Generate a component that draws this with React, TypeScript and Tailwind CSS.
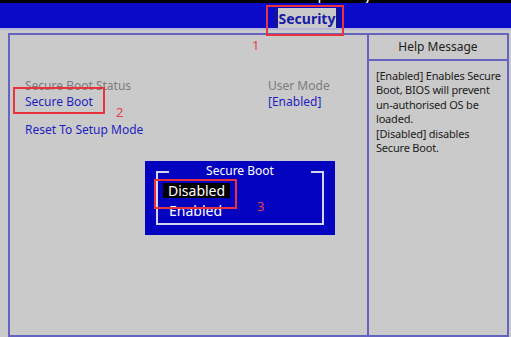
const font = "font-['Noto_Sans','Open_Sans','DejaVu_Sans',sans-serif]";

function HelpPanel() {
  return (
    <div className="flex-1 flex flex-col">
      <div className="h-[26px] flex items-center justify-center border-b-2 border-[#6464c0] text-[12px] text-[#202020]">
        Help Message
      </div>
      <div className="pl-[7px] pt-[8px] text-[11px] leading-[14.4px] tracking-[-0.2px] text-[#1c1c1c]">
        [Enabled] Enables Secure Boot, BIOS will prevent un-authorised OS be loaded.
        <br />
        [Disabled] disables
        <br />
        Secure Boot.
      </div>
    </div>
  );
}

function SecureBootPopup() {
  return (
    <div className="absolute left-[145px] top-[161px] w-[190px] h-[74px] bg-[#0404c0] pt-[11px] px-[11px]">
      <div className="relative h-[53px] border-x-2 border-b-2 border-[#d4d4ec]">
        <div className="absolute -left-[2px] -top-[1px] w-[13px] h-[2px] bg-[#d4d4ec]" />
        <div className="absolute -right-[2px] -top-[1px] w-[13px] h-[2px] bg-[#d4d4ec]" />
        <div className="absolute left-0 right-0 -top-[9px] text-center text-[12px] leading-[16px] text-white">
          Secure Boot
        </div>
        <div className="pt-[11px] pl-[5px] flex flex-col items-start">
          <span className="bg-black text-white text-[14px] leading-[15px] h-[15px] px-[5px]">Disabled</span>
          <span className="text-white text-[14px] leading-[16px] mt-[5px] pl-[6px]">Enabled</span>
        </div>
      </div>
    </div>
  );
}

export default function App() {
  return (
    <div className={`relative w-[511px] h-[337px] overflow-hidden bg-[#cacaca] ${font}`}>
      <div className="h-[3px] bg-black overflow-hidden relative">
        <span className="absolute left-[286px] -top-[14px] text-[15px] leading-[16px] text-white">
          Setup Utility
        </span>
      </div>
      <div className="h-[25px] bg-[#0a0ac8] flex items-end">
        <div className="ml-[274px] h-[20px] flex">
          <div className="w-[4px] bg-[#12129a]" />
          <div className="w-[58px] bg-[#cacaca] flex items-center justify-center text-[14px] font-bold text-[#1a1aa6]">
            Security
          </div>
          <div className="w-[4px] bg-[#12129a]" />
        </div>
      </div>
      <div className="h-[2px] bg-[#b4b4dc]" />
      <div className="pt-[3px] pl-[8px]">
        <div className="w-[501px] h-[304px] border-2 border-[#6464c0] flex">
          <div className="w-[359px] border-r-2 border-[#6464c0] pl-[15px] pt-[43px] text-[12px] leading-[16px]">
            <div className="grid grid-cols-[243px_1fr]">
              <span className="text-[#7c7c7c]">Secure Boot Status</span>
              <span className="text-[#7c7c7c]">User Mode</span>
              <span className="text-[#1e1ec0]">Secure Boot</span>
              <span className="text-[#1e1ec0]">[Enabled]</span>
            </div>
            <div className="mt-[12px] text-[#1e1ec0]">Reset To Setup Mode</div>
          </div>
          <HelpPanel />
        </div>
      </div>

      <SecureBootPopup />

      <div className="absolute left-[266px] top-[5px] w-[78px] h-[31px] border-2 border-[#e8323c]" />
      <div className="absolute left-[252px] top-[37px] text-[13px] leading-[16px] text-[#e8404c]">1</div>
      <div className="absolute left-[13px] top-[87px] w-[92px] h-[27px] border-2 border-[#e8323c]" />
      <div className="absolute left-[116px] top-[104px] text-[13px] leading-[16px] text-[#e8404c]">2</div>
      <div className="absolute left-[154px] top-[179px] w-[83px] h-[30px] border-2 border-[#e8323c]" />
      <div className="absolute left-[257px] top-[198px] text-[13px] leading-[16px] text-[#e8404c]">3</div>
    </div>
  );
}
